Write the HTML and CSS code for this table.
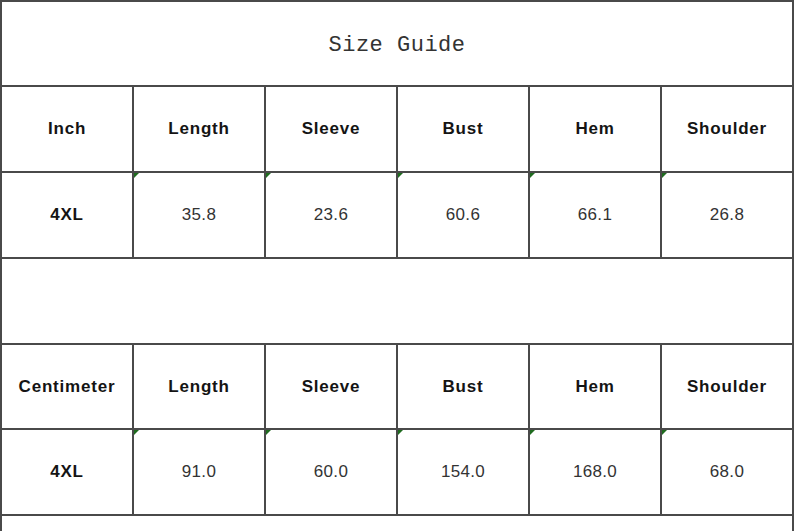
FILE: index.html
```html
<!DOCTYPE html>
<html>
<head>
<meta charset="utf-8">
<link rel="stylesheet" href="styles.css">
</head>
<body>
<div class="sheet">
  <div class="cell title">Size Guide</div>

  <div class="cell head">Inch</div>
  <div class="cell head">Length</div>
  <div class="cell head">Sleeve</div>
  <div class="cell head">Bust</div>
  <div class="cell head">Hem</div>
  <div class="cell head">Shoulder</div>

  <div class="cell head">4XL</div>
  <div class="cell num mark">35.8</div>
  <div class="cell num mark">23.6</div>
  <div class="cell num mark">60.6</div>
  <div class="cell num mark">66.1</div>
  <div class="cell num mark">26.8</div>

  <div class="cell blank"></div>

  <div class="cell head">Centimeter</div>
  <div class="cell head">Length</div>
  <div class="cell head">Sleeve</div>
  <div class="cell head">Bust</div>
  <div class="cell head">Hem</div>
  <div class="cell head">Shoulder</div>

  <div class="cell head">4XL</div>
  <div class="cell num mark">91.0</div>
  <div class="cell num mark">60.0</div>
  <div class="cell num mark">154.0</div>
  <div class="cell num mark">168.0</div>
  <div class="cell num mark">68.0</div>

  <div class="cell blank"></div>
</div>
</body>
</html>
```

FILE: styles.css
```css
html, body {
  margin: 0;
  padding: 0;
  background: #ffffff;
  overflow: hidden;
}

.sheet {
  width: 794px;
  height: 531px;
  box-sizing: border-box;
  display: grid;
  grid-template-columns: repeat(6, 1fr);
  grid-template-rows: 83px 84px 84px 84px 83px 84px 1fr;
  gap: 2px;
  padding: 2px 2px 0 2px;
  background: #4a4a4a;
}

.cell {
  background: #ffffff;
  display: flex;
  align-items: center;
  justify-content: center;
  position: relative;
  font-family: "Liberation Sans", Arial, sans-serif;
}

.title {
  grid-column: 1 / -1;
  font-family: "Liberation Mono", "Courier New", monospace;
  font-size: 22px;
  letter-spacing: 0.5px;
  color: #333333;
  padding-top: 4px;
}

.blank {
  grid-column: 1 / -1;
}

.head {
  font-weight: bold;
  font-size: 17px;
  letter-spacing: 0.8px;
  color: #141414;
}

.num {
  font-size: 17px;
  letter-spacing: 0.3px;
  color: #333333;
}

.mark::before {
  content: "";
  position: absolute;
  left: 0;
  top: 0;
  width: 0;
  height: 0;
  border-top: 5px solid #1f6b1f;
  border-right: 5px solid transparent;
}
```
